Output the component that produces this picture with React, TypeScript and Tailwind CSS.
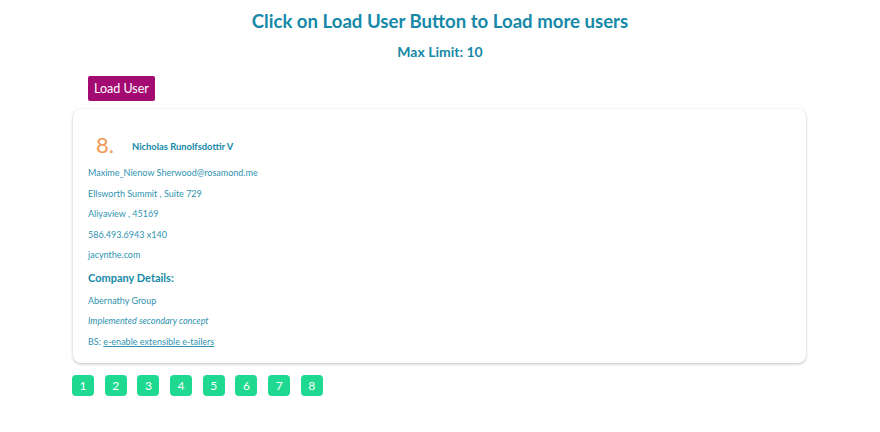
import React from "react";

type User = {
  id: number;
  name: string;
  username: string;
  email: string;
  street: string;
  suite: string;
  city: string;
  zipcode: string;
  phone: string;
  website: string;
  company: { name: string; catchPhrase: string; bs: string };
};

const user: User = {
  id: 8,
  name: "Nicholas Runolfsdottir V",
  username: "Maxime_Nienow",
  email: "Sherwood@rosamond.me",
  street: "Ellsworth Summit",
  suite: "Suite 729",
  city: "Aliyaview",
  zipcode: "45169",
  phone: "586.493.6943 x140",
  website: "jacynthe.com",
  company: {
    name: "Abernathy Group",
    catchPhrase: "Implemented secondary concept",
    bs: "e-enable extensible e-tailers",
  },
};

const pages = [1, 2, 3, 4, 5, 6, 7, 8];

export default function App() {
  return (
    <div className="min-h-[432px] bg-white font-['Lato',sans-serif] text-[#2a90ad]">
      <div className="pt-[9px] text-center">
        <h1 className="text-[18.6px] font-bold leading-[24px] text-[#1689a8]">
          Click on Load User Button to Load more users
        </h1>
        <h2 className="mt-[10px] text-[14px] font-bold leading-[18px] text-[#1689a8]">Max Limit: 10</h2>
      </div>

      <div className="mt-[14px] pl-[88px]">
        <button
          type="button"
          className="h-[25px] rounded-[2px] bg-[#a30b73] px-[6px] text-[12.5px] leading-[25px] text-white"
        >
          Load User
        </button>
      </div>

      <div className="ml-[73px] mt-[8px] w-[733px] rounded-[8px] bg-white px-[15px] pb-[15px] pt-[21px] shadow-[0_1px_3px_rgba(0,0,0,0.25)]">
        <div className="flex items-center pl-[8px]">
          <span className="text-[22px] leading-[30px] text-[#f29a55]">{user.id}.</span>
          <span className="ml-[18px] mt-[4px] text-[9.4px] font-bold text-[#1689a8]">{user.name}</span>
        </div>
        <div className="mt-[6px] flex flex-col gap-[7px] text-[9px] leading-[13.5px] text-[#2f93b0]">
          <p>
            {user.username} {user.email}
          </p>
          <p>
            {user.street} , {user.suite}
          </p>
          <p>
            {user.city} , {user.zipcode}
          </p>
          <p>{user.phone}</p>
          <p>{user.website}</p>
        </div>
        <h3 className="mt-[8px] text-[11px] font-bold leading-[16px] text-[#1689a8]">Company Details:</h3>
        <div className="mt-[8px] flex flex-col gap-[7px] text-[9px] leading-[13.5px] text-[#2f93b0]">
          <p>{user.company.name}</p>
          <p className="italic">{user.company.catchPhrase}</p>
          <p>
            BS: <span className="underline">{user.company.bs}</span>
          </p>
        </div>
      </div>

      <div className="ml-[72px] mt-[12px] flex gap-[10.7px]">
        {pages.map((page) => (
          <button
            key={page}
            type="button"
            className="h-[21px] w-[22px] rounded-[4px] bg-[#1ed98f] text-[12px] leading-[21px] text-white"
          >
            {page}
          </button>
        ))}
      </div>
    </div>
  );
}
